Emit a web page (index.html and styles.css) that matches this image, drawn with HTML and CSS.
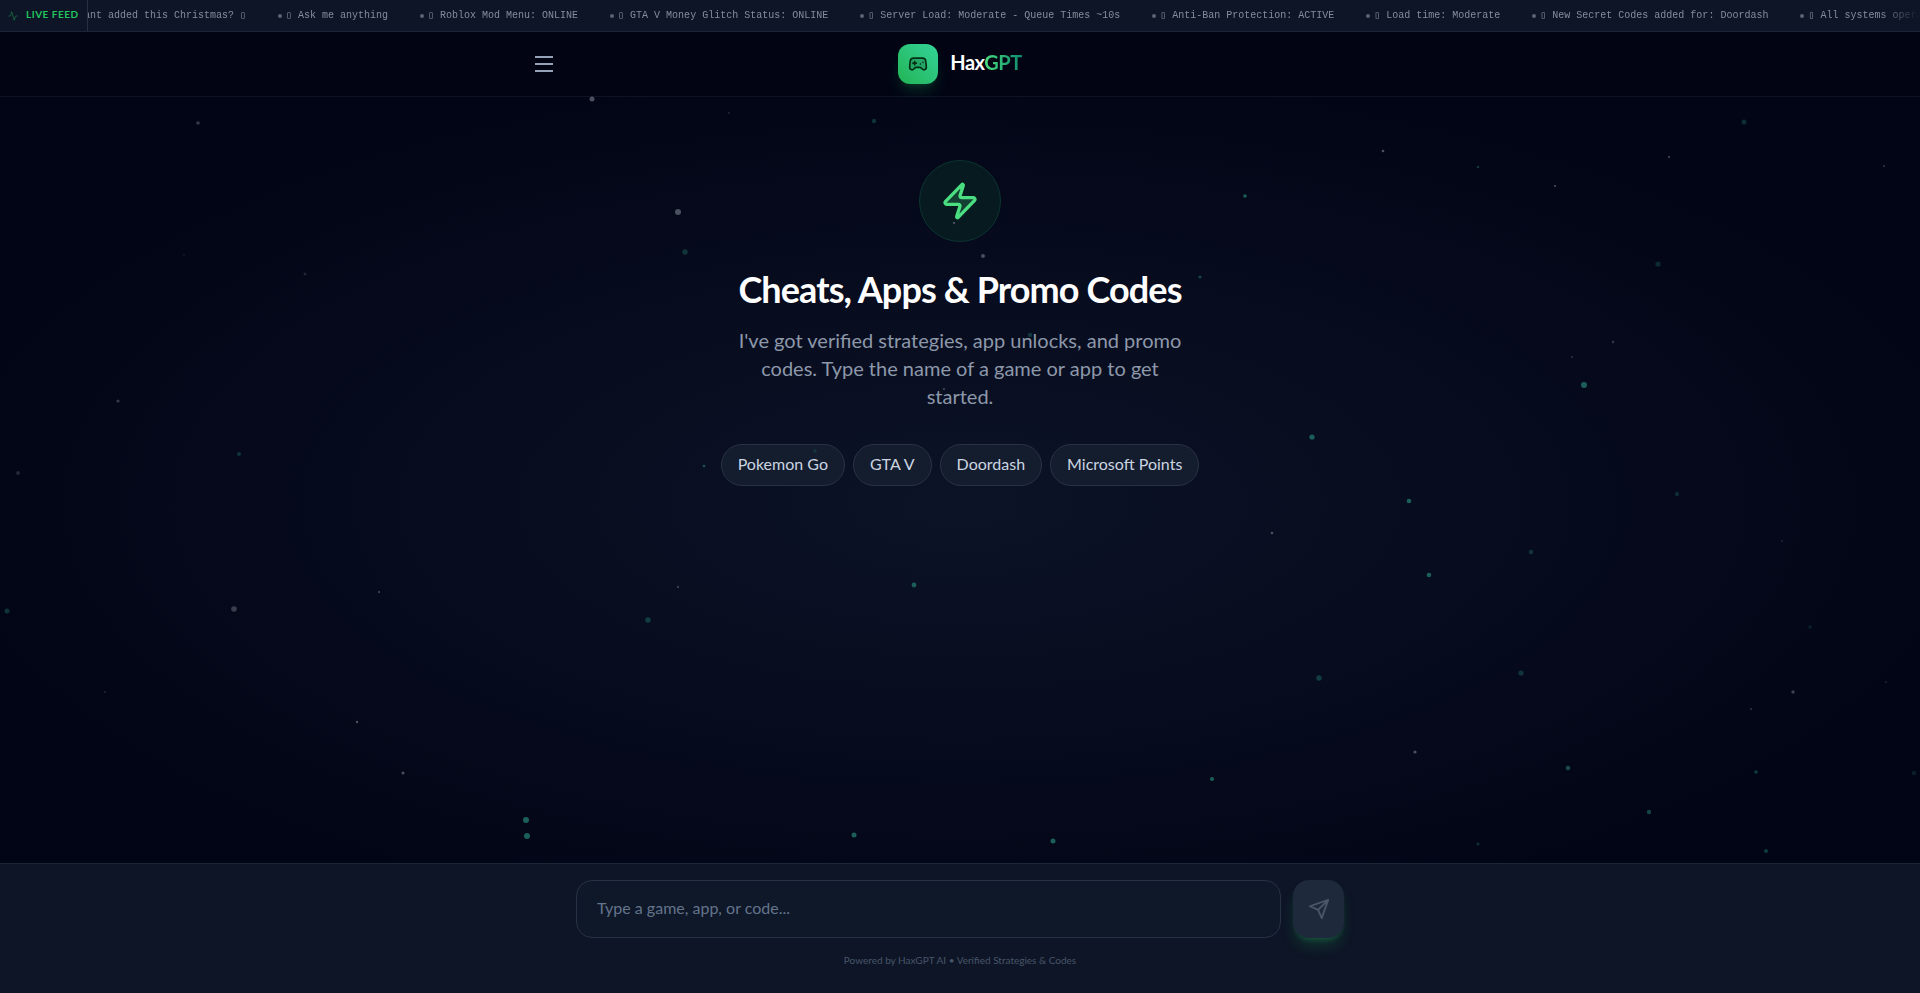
FILE: index.html
```html
<!DOCTYPE html>
<html lang="en">
<head>
<meta charset="utf-8">
<title>HaxGPT</title>
<link rel="stylesheet" href="styles.css">
</head>
<body>
<div class="ticker">
  <div class="ticker-label">
    <svg class="pulse" viewBox="0 0 24 24" aria-hidden="true"><path d="M22 12h-2.500a2 2 0 0 0-1.900 1.500L15.200 21.800a.25.25 0 0 1-.5 0L9.200 2.200a.25.25 0 0 0-.5 0L6.400 10.500A2 2 0 0 1 4.500 12H2"/></svg>
    <span>LIVE FEED</span>
  </div>
  <div class="ticker-track">
    <div class="ticker-item first"><span>ant added this Christmas? ▯</span></div>
    <div class="ticker-item"><i></i><span>▯ Ask me anything</span></div>
    <div class="ticker-item"><i></i><span>▯ Roblox Mod Menu: ONLINE</span></div>
    <div class="ticker-item"><i></i><span>▯ GTA V Money Glitch Status: ONLINE</span></div>
    <div class="ticker-item"><i></i><span>▯ Server Load: Moderate - Queue Times ~10s</span></div>
    <div class="ticker-item"><i></i><span>▯ Anti-Ban Protection: ACTIVE</span></div>
    <div class="ticker-item"><i></i><span>▯ Load time: Moderate</span></div>
    <div class="ticker-item"><i></i><span>▯ New Secret Codes added for: Doordash</span></div>
    <div class="ticker-item"><i></i><span>▯ All systems operational</span></div>
  </div>
</div>
<header class="header">
  <div class="header-inner">
    <button class="menu" type="button" aria-label="Menu"><svg viewBox="0 0 28 28"><path d="M5 7h18M5 14h18M5 21h18"/></svg></button>
    <div class="brand">
      <div class="logo"><svg viewBox="0 0 24 24" aria-hidden="true"><path class="pad" d="M17.300 5H6.700a4 4 0 0 0-4 3.600C2.600 9.400 2 14.500 2 16a3 3 0 0 0 3 3c1 0 1.500-.5 2-1l1.400-1.400A2 2 0 0 1 9.800 16h4.400a2 2 0 0 1 1.400.6L17 18c.5.5 1 1 2 1a3 3 0 0 0 3-3c0-1.500-.6-6.600-.7-7.400a4 4 0 0 0-4-3.600Z"/><path d="M6 11h4M8 9v4M15 12h.01M18 10h.01"/></svg></div>
      <div class="name">Hax<span>GPT</span></div>
    </div>
  </div>
</header>
<main class="hero">
  <div class="bolt"><svg viewBox="0 0 24 24" aria-hidden="true"><path d="M4 14a1 1 0 0 1-.78-1.630l9.900-10.200a.5.5 0 0 1 .86.460l-1.920 6.020A1 1 0 0 0 13 10h7a1 1 0 0 1 .78 1.630l-9.900 10.200a.5.5 0 0 1-.86-.460l1.920-6.020A1 1 0 0 0 11 14z"/></svg></div>
  <h1>Cheats, Apps &amp; Promo Codes</h1>
  <p>I've got verified strategies, app unlocks, and promo codes. Type the name of a game or app to get started.</p>
  <div class="chips">
    <button type="button">Pokemon Go</button>
    <button type="button">GTA V</button>
    <button type="button">Doordash</button>
    <button type="button">Microsoft Points</button>
  </div>
</main>
<footer class="footer">
  <form class="composer">
    <input type="text" aria-label="Game, app, or code" placeholder="Type a game, app, or code...">
    <button type="button" aria-label="Send"><svg viewBox="0 0 24 24"><path d="m22 2-7 20-4-9-9-4ZM22 2 11 13"/></svg></button>
  </form>
  <p class="powered">Powered by HaxGPT AI • Verified Strategies &amp; Codes</p>
</footer>
<svg class="particles" viewBox="0 0 1920 993" preserveAspectRatio="xMidYMid slice" aria-hidden="true">
  <g class="grey">
    <circle cx="592" cy="99" r="2.500"/><circle cx="678" cy="212" r="3"/><circle cx="234" cy="609" r="2.800" opacity=".75"/><circle cx="983" cy="256" r="2"/>
    <circle cx="198" cy="123" r="1.800" opacity=".7"/><circle cx="118" cy="401" r="1.600" opacity=".7"/><circle cx="18" cy="473" r="2" opacity=".45"/>
    <circle cx="379" cy="592" r="1"/><circle cx="678" cy="587" r="1"/><circle cx="357" cy="722" r="1.200"/><circle cx="403" cy="773" r="1.500"/>
    <circle cx="105" cy="692" r="1" opacity=".4"/><circle cx="305" cy="274" r="1.500" opacity=".4"/><circle cx="729" cy="113" r="1" opacity=".4"/>
    <circle cx="1383" cy="151" r="1.300"/><circle cx="1555" cy="186" r="1.100"/><circle cx="1669" cy="157" r="1.200" opacity=".7"/><circle cx="1884" cy="166" r="1.200" opacity=".5"/>
    <circle cx="1613" cy="342" r="1.200" opacity=".7"/><circle cx="1572" cy="357" r="1" opacity=".6"/><circle cx="1272" cy="533" r="1.300"/>
    <circle cx="1793" cy="692" r="1.700" opacity=".8"/><circle cx="1751" cy="709" r="1.100" opacity=".6"/><circle cx="1415" cy="752" r="1.600"/>
    <circle cx="954" cy="223" r="1.200"/><circle cx="1886" cy="682" r="1" opacity=".4"/><circle cx="1782" cy="541" r="1.200" opacity=".3"/>
    <circle cx="944" cy="389" r="1.200" opacity=".7"/>
  </g>
  <g class="green">
    <circle cx="526" cy="820" r="3"/><circle cx="527" cy="836" r="3"/><circle cx="854" cy="835" r="2.500"/><circle cx="1053" cy="841" r="2.500"/>
    <circle cx="914" cy="585" r="2.400"/><circle cx="1212" cy="779" r="2"/><circle cx="1312" cy="437" r="2.600"/><circle cx="1584" cy="385" r="3"/>
    <circle cx="1409" cy="501" r="2.300"/><circle cx="1429" cy="575" r="2.300"/><circle cx="1245" cy="196" r="1.800"/>
    <circle cx="1568" cy="768" r="2.200" opacity=".8"/><circle cx="1649" cy="812" r="2.200" opacity=".7"/><circle cx="1756" cy="772" r="1.800" opacity=".6"/><circle cx="1766" cy="851" r="2" opacity=".6"/>
    <circle cx="1478" cy="167" r="1.200" opacity=".6"/><circle cx="1744" cy="122" r="2.500" opacity=".45"/><circle cx="1658" cy="264" r="2.600" opacity=".4"/>
    <circle cx="1677" cy="494" r="2.200" opacity=".4"/><circle cx="1531" cy="552" r="2.200" opacity=".5"/><circle cx="1521" cy="673" r="2.600" opacity=".5"/><circle cx="1319" cy="678" r="2.700" opacity=".6"/>
    <circle cx="1810" cy="627" r="1.700" opacity=".3"/><circle cx="1478" cy="844" r="1.500" opacity=".5"/><circle cx="1914" cy="773" r="2.200" opacity=".3"/>
    <circle cx="685" cy="252" r="2.700" opacity=".5"/><circle cx="648" cy="620" r="2.700" opacity=".6"/><circle cx="7" cy="611" r="2.500" opacity=".5"/><circle cx="239" cy="454" r="2" opacity=".5"/>
    <circle cx="184" cy="255" r="1.500" opacity=".2"/><circle cx="874" cy="121" r="2.200" opacity=".5"/><circle cx="1200" cy="277" r="1.600" opacity=".7"/><circle cx="1030" cy="335" r="2.200" opacity=".5"/>
    <circle cx="704" cy="466" r="1.300" opacity=".9"/><circle cx="815" cy="451" r="1.700" opacity=".4"/>
  </g>
</svg>
</body>
</html>
```
FILE: styles.css
```css
* { box-sizing: border-box; margin: 0; }
body { min-height: 100vh; display: flex; flex-direction: column; background: #020414; color: #fff; font-family: Lato, sans-serif; font-size: 16px; line-height: 24px; }
svg { fill: none; stroke: currentColor; stroke-width: 2; stroke-linecap: round; stroke-linejoin: round; display: block; }
button, input { font: inherit; color: inherit; }
.particles { position: fixed; inset: 0; width: 100%; height: 100%; stroke: none; pointer-events: none; }
.particles .grey { fill: #4b505f; }
.particles .green { fill: #1b5f58; }
.ticker { height: 32px; display: flex; background: #0e1526; border-bottom: 1px solid #1b2436; overflow: hidden; }
.ticker-label { flex: none; width: 88px; display: flex; align-items: center; gap: 8px; padding: 0 0 3px 8px; border-right: 1px solid #263043; color: #22c55e; font-size: 10px; font-weight: 700; line-height: 16px; letter-spacing: 0.05em; white-space: nowrap; }
.pulse { width: 10px; height: 10px; margin-top: 3px; opacity: .5; }
.ticker-track { flex: 1; min-width: 0; display: flex; align-items: center; gap: 32px; overflow: hidden; font: 10px/16px "Liberation Mono", monospace; color: #858d9b; white-space: nowrap; mask-image: linear-gradient(to right, #000 calc(100% - 40px), transparent); }
.ticker-item { flex: none; display: flex; align-items: center; gap: 4px; }
.ticker-item i { width: 4px; height: 4px; margin-top: 1px; border-radius: 2px; background: #596273; }
.first { width: 158px; justify-content: flex-end; overflow: hidden; }
.header { border-bottom: 1px solid #0d1322; }
.header-inner { max-width: 896px; margin: 0 auto; padding: 0 16px; height: 64px; display: grid; grid-template-columns: 1fr auto 1fr; align-items: center; }
.menu { width: 32px; height: 32px; padding: 2px; border: 0; background: none; color: #94a3b8; }
.menu svg { width: 28px; height: 28px; stroke-linecap: butt; }
.brand { display: flex; align-items: center; gap: 12px; }
.logo { width: 40px; height: 40px; border-radius: 12px; display: grid; place-items: center; background: linear-gradient(to top right, #22b455, #34d399); color: #052e16; box-shadow: 0 10px 15px -3px rgba(34, 197, 94, .2), 0 4px 6px -4px rgba(34, 197, 94, .2); }
.logo svg { width: 20px; height: 20px; }
.pad { fill: rgba(5, 46, 22, .2); }
.name { padding-bottom: 4px; font-size: 20px; line-height: 28px; font-weight: 700; letter-spacing: -0.025em; }
.name span { background: linear-gradient(to right, #4ade80, #0f8a6c); background-clip: text; color: transparent; }
.hero { flex: 1; padding: 63px 16px 32px; display: flex; flex-direction: column; align-items: center; text-align: center; background: radial-gradient(ellipse at 50% 53%, #0c1326 0%, #020516 75%); }
.bolt { width: 82px; height: 82px; border-radius: 50%; display: grid; place-items: center; background: #061a20; border: 1px solid #0d3530; color: #4ade80; }
.bolt svg { width: 40px; height: 40px; fill: rgba(74, 222, 128, .2); }
h1 { margin-top: 27px; font-size: 36px; line-height: 40px; font-weight: 700; letter-spacing: -0.025em; }
.hero p { max-width: 448px; margin-top: 17px; font-size: 20px; line-height: 28px; color: #8d98aa; }
.chips { margin-top: 34px; display: flex; flex-wrap: wrap; justify-content: center; gap: 8px; }
.chips button { padding: 7px 16px 9px; border: 1px solid #293242; border-radius: 24px; background: #141d2e; color: #cbd5e1; }
.footer { padding: 16px 16px 25px; background: #0e1526; border-top: 1px solid #1d2638; }
.composer { max-width: 768px; margin: 0 auto; display: flex; gap: 12px; }
.composer input { flex: 1; min-width: 0; height: 58px; padding: 0 20px 3px; border: 1px solid #263244; border-radius: 16px; background: #0f1829; }
.composer input::placeholder { color: #64748b; opacity: 1; }
.composer button { flex: none; width: 51px; display: grid; place-items: center; padding: 0; border: 0; border-radius: 16px; background: #1e293b; color: #4b5768; box-shadow: 0 10px 15px -3px rgba(34, 197, 94, .2), 0 4px 6px -4px rgba(34, 197, 94, .4); }
.composer button svg { width: 22px; height: 22px; }
.powered { margin-top: 14px; font-size: 10px; line-height: 16px; color: #475569; text-align: center; }
```
